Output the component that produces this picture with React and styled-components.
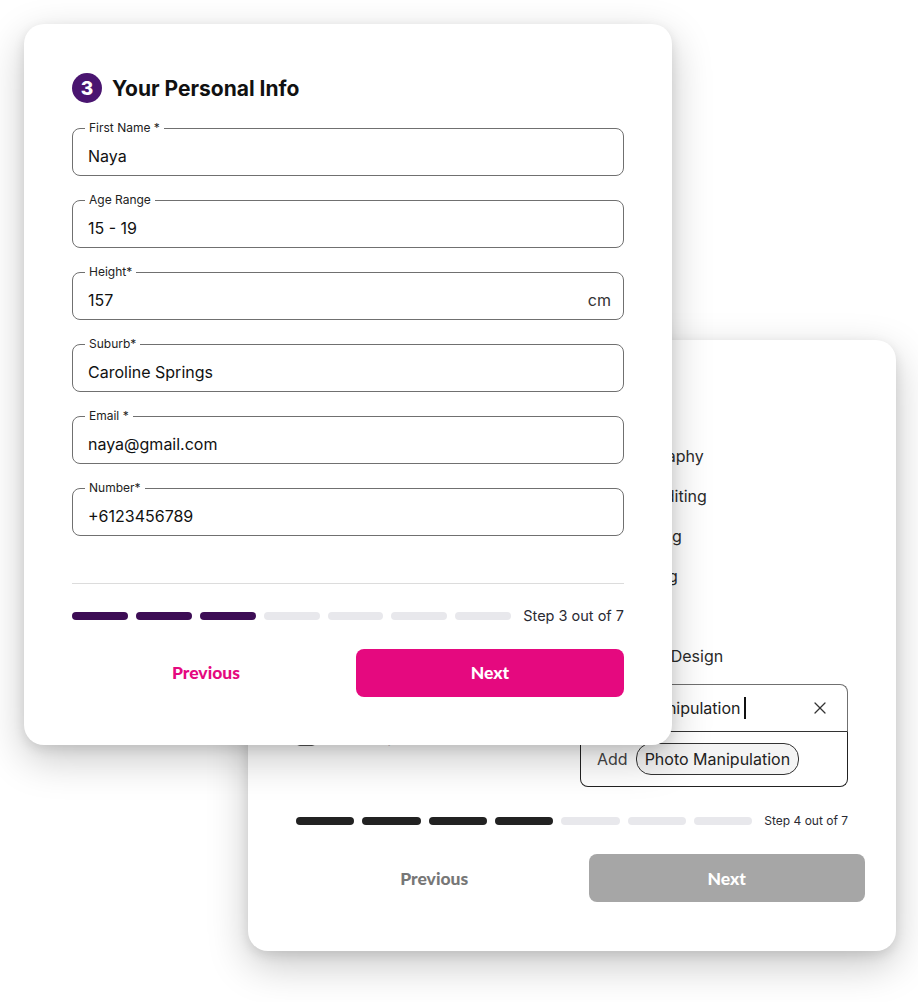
import React from 'react';
import styled, {createGlobalStyle} from 'styled-components';
import {X} from 'lucide-react';

const GlobalStyle = createGlobalStyle`
  body {
    margin: 0;
    background: #ffffff;
    font-family: Inter, "Liberation Sans", sans-serif;
  }
`;

const Canvas = styled.div`
  display: grid;
  width: 918px;
  height: 1002px;
  overflow: hidden;
`;

const Card = styled.section`
  grid-area: 1 / 1;
  align-self: start;
  justify-self: start;
  position: relative;
  z-index: ${({$front}) => ($front ? 2 : 1)};
  box-sizing: border-box;
  width: 648px;
  margin: ${({$top, $left}) => `${$top}px 0 0 ${$left}px`};
  padding: 48px 48px ${({$bottom}) => $bottom}px;
  background: #ffffff;
  border-radius: 20px;
  box-shadow: 0 14px 40px rgba(0, 0, 0, 0.22), 0 4px 12px rgba(0, 0, 0, 0.1);
`;

const Heading = styled.h2`
  display: flex;
  align-items: center;
  gap: 10px;
  height: 32px;
  margin: 0 0 ${({$gap}) => $gap}px;
  font-family: Inter, sans-serif;
  font-size: 21px;
  font-weight: 700;
  color: #111111;
`;

const StepBadge = styled.span`
  display: flex;
  align-items: center;
  justify-content: center;
  width: 30px;
  height: 30px;
  border-radius: 50%;
  background: #4a1570;
  color: #ffffff;
  font-size: 19px;
  font-weight: 800;
`;

const Fields = styled.div`
  display: flex;
  flex-direction: column;
  gap: 18.5px;
`;

const Field = styled.fieldset`
  margin: 0;
  padding: 0 12px;
  min-width: 0;
  border: 1.5px solid #707070;
  border-radius: 8px;
`;

const Legend = styled.legend`
  padding: 0 4px;
  font-size: 12px;
  line-height: 12px;
  color: #222222;
`;

const ValueRow = styled.div`
  box-sizing: border-box;
  display: flex;
  align-items: center;
  justify-content: space-between;
  height: 40.5px;
  padding: 4px 0 0 3px;
  font-size: 16px;
  color: #111111;
`;

const Unit = styled.span`
  color: #333333;
`;

const Divider = styled.div`
  height: 1px;
  margin-top: 47px;
  background: #dcdcdc;
`;

const Progress = styled.div`
  display: flex;
  align-items: center;
  gap: 8px;
  margin-top: ${({$top}) => $top}px;
`;

const Segment = styled.span`
  flex: 1;
  height: 8px;
  border-radius: 4px;
  background: ${({$on, $tone}) => ($on ? $tone : '#e8e8ec')};
`;

const StepText = styled.span`
  margin-left: 4px;
  font-size: ${({$size}) => $size}px;
  line-height: 20px;
  color: #2a2a33;
  white-space: nowrap;
`;

const Actions = styled.div`
  display: grid;
  grid-template-columns: 1fr 1fr;
  gap: 16px;
  margin-top: ${({$top}) => $top}px;
  margin-right: ${({$overhang}) => -$overhang}px;
`;

const TextButton = styled.button`
  height: 48px;
  border: 0;
  background: none;
  font-family: Lato, sans-serif;
  font-size: 17.5px;
  font-weight: 900;
  color: ${({$color}) => $color};
`;

const FillButton = styled.button`
  height: 48px;
  border: 0;
  border-radius: 8px;
  background: ${({$color}) => $color};
  font-family: Lato, sans-serif;
  font-size: 17.5px;
  font-weight: 900;
  color: #ffffff;
`;

const Options = styled.div`
  display: grid;
  grid-template-columns: 1fr 1fr;
  gap: 16px;
  margin-top: 24px;
`;

const Column = styled.div`
  display: flex;
  flex-direction: column;
  gap: 16px;
`;

const Option = styled.label`
  display: flex;
  align-items: center;
  gap: 7px;
  height: 24px;
  font-size: 16px;
  color: #2b2b2b;
`;

const Box = styled.span`
  box-sizing: border-box;
  width: 20px;
  height: 20px;
  border: 1.5px solid #555555;
  border-radius: 4px;
`;

const Combo = styled.div`
  position: relative;
`;

const TagInput = styled.div`
  box-sizing: border-box;
  display: flex;
  align-items: center;
  height: 48px;
  padding: 0 17px 0 14px;
  border: 1.5px solid #707070;
  border-bottom: 1px solid #333333;
  border-radius: 8px 8px 0 0;
  font-size: 16px;
  color: #222222;
`;

const Caret = styled.span`
  width: 1.5px;
  height: 22px;
  margin-left: 4px;
  background: #111111;
`;

const Clear = styled.span`
  display: flex;
  margin-left: auto;
  color: #333333;
`;

const Menu = styled.div`
  position: absolute;
  top: 100%;
  left: 0;
  right: 0;
  box-sizing: border-box;
  display: flex;
  align-items: center;
  gap: 8px;
  height: 55px;
  padding: 0 16px;
  background: #ffffff;
  border: 1px solid #222222;
  border-top: 0;
  border-radius: 0 0 8px 8px;
  font-size: 16px;
  color: #444444;
`;

const Chip = styled.span`
  display: flex;
  align-items: center;
  height: 30px;
  padding: 0 8px;
  border: 1px solid #333333;
  border-radius: 15px;
  background: #f4f4f4;
  color: #222222;
`;

const fields = [
  {label: 'First Name *', value: 'Naya'},
  {label: 'Age Range', value: '15 - 19'},
  {label: 'Height*', value: '157', unit: 'cm'},
  {label: 'Suburb*', value: 'Caroline Springs'},
  {label: 'Email *', value: 'naya@gmail.com'},
  {label: 'Number*', value: '+6123456789'},
];

const leftInterests = [
  'Acting', 'Singing', 'Dancing', 'Modelling',
  'Painting', 'Writing', 'Fashion', 'Jewellery',
];
const rightInterests = [
  'Photography', 'Video Editing', 'Sketching', 'Sculpting', 'Music', 'Graphic Design',
];

const StepBar = ({step, total, tone, size, top}) => (
  <Progress $top={top}>
    {Array.from({length: total}, (_, i) => (
      <Segment key={i} $on={i < step} $tone={tone} />
    ))}
    <StepText $size={size}>{`Step ${step} out of ${total}`}</StepText>
  </Progress>
);

const PersonalInfo = () => (
  <Card $front $top={24} $left={24} $bottom={48}>
    <Heading $gap={18}>
      <StepBadge>3</StepBadge>
      Your Personal Info
    </Heading>
    <Fields>
      {fields.map((f) => (
        <Field key={f.label}>
          <Legend>{f.label}</Legend>
          <ValueRow>
            <span>{f.value}</span>
            {f.unit && <Unit>{f.unit}</Unit>}
          </ValueRow>
        </Field>
      ))}
    </Fields>
    <Divider />
    <StepBar step={3} total={7} tone="#3d0d55" size={14.5} top={22} />
    <Actions $top={23} $overhang={0}>
      <TextButton $color="#e5097f">Previous</TextButton>
      <FillButton $color="#e5097f">Next</FillButton>
    </Actions>
  </Card>
);

const Interests = () => (
  <Card $top={340} $left={248} $bottom={49}>
    <Heading $gap={0}>
      <StepBadge>4</StepBadge>
      Your Interests
    </Heading>
    <Options>
      <Column>
        {leftInterests.map((name) => (
          <Option key={name}>
            <Box />
            {name}
          </Option>
        ))}
      </Column>
      <Column>
        {rightInterests.map((name) => (
          <Option key={name}>
            <Box />
            {name}
          </Option>
        ))}
        <Combo>
          <TagInput>
            Photo Manipulation
            <Caret />
            <Clear>
              <X size={20} strokeWidth={1.5} />
            </Clear>
          </TagInput>
          <Menu>
            Add
            <Chip>Photo Manipulation</Chip>
          </Menu>
        </Combo>
      </Column>
    </Options>
    <StepBar step={4} total={7} tone="#222222" size={12} top={63} />
    <Actions $top={23} $overhang={17}>
      <TextButton $color="#777777">Previous</TextButton>
      <FillButton $color="#a6a6a6">Next</FillButton>
    </Actions>
  </Card>
);

const App = () => (
  <>
    <GlobalStyle />
    <Canvas>
      <Interests />
      <PersonalInfo />
    </Canvas>
  </>
);

export default App;
